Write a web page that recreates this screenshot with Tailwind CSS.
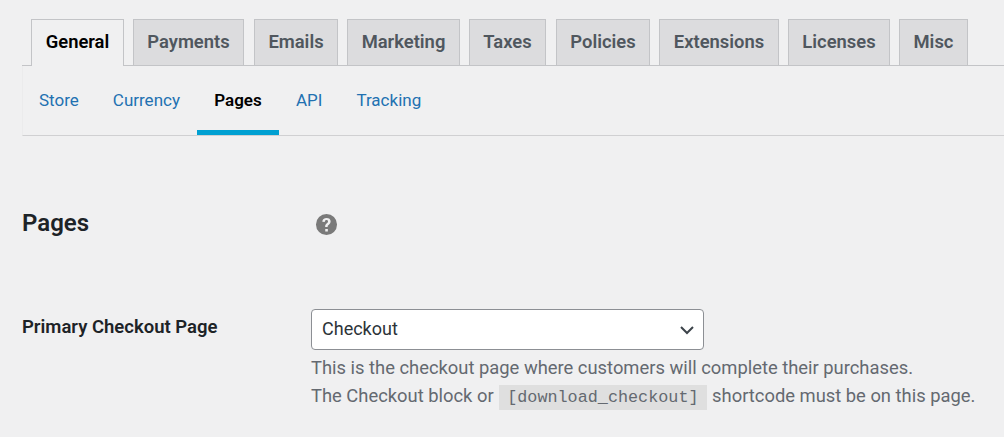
<!DOCTYPE html>
<html lang="en">
<head>
    <meta charset="UTF-8">
    <title>Settings - Pages</title>
    <script src="https://cdn.jsdelivr.net/npm/@tailwindcss/browser@4"></script>
</head>
<body class="bg-[#f0f0f1] w-[1004px] h-[437px] overflow-hidden font-['Roboto',sans-serif] text-[#1d2327] antialiased">

    <div class="pl-[22px] pt-[19px]">
        <!-- Main tabs -->
        <nav class="flex h-[47px] gap-[9px] pl-[9px] border-b border-[#c3c4c7] text-[18.4px] leading-[24px] font-semibold text-[#50575e]">
            <a class="h-[47px] w-[93px] pb-[2px] flex items-center justify-center border border-b-0 border-[#c3c4c7] bg-[#f0f0f1] text-black">General</a>
            <a class="h-[46px] w-[111px] pb-[2px] flex items-center justify-center border border-b-0 border-[#c3c4c7] bg-[#dcdcde]">Payments</a>
            <a class="ml-px h-[46px] w-[84px] pb-[2px] flex items-center justify-center border border-b-0 border-[#c3c4c7] bg-[#dcdcde]">Emails</a>
            <a class="h-[46px] w-[113px] pb-[2px] flex items-center justify-center border border-b-0 border-[#c3c4c7] bg-[#dcdcde]">Marketing</a>
            <a class="h-[46px] w-[77px] pb-[2px] flex items-center justify-center border border-b-0 border-[#c3c4c7] bg-[#dcdcde]">Taxes</a>
            <a class="ml-px h-[46px] w-[94px] pb-[2px] flex items-center justify-center border border-b-0 border-[#c3c4c7] bg-[#dcdcde]">Policies</a>
            <a class="h-[46px] w-[120px] pb-[2px] flex items-center justify-center border border-b-0 border-[#c3c4c7] bg-[#dcdcde]">Extensions</a>
            <a class="h-[46px] w-[102px] pb-[2px] flex items-center justify-center border border-b-0 border-[#c3c4c7] bg-[#dcdcde]">Licenses</a>
            <a class="h-[46px] w-[69px] pb-[2px] flex items-center justify-center border border-b-0 border-[#c3c4c7] bg-[#dcdcde]">Misc</a>
        </nav>

        <!-- Sub tabs -->
        <nav class="flex h-[70px] border-b border-l border-b-[#d0d0d2] border-l-[#ebebec] pl-[16px] text-[17px] text-[#2271b1]">
            <a class="pt-[22px]">Store</a>
            <a class="pt-[22px] ml-[34px]">Currency</a>
            <a class="w-[82px] ml-[17px] h-[69px] pt-[22px] text-center font-semibold text-black border-b-[5px] border-[#00a0d2]">Pages</a>
            <a class="pt-[22px] ml-[17px]">API</a>
            <a class="pt-[22px] ml-[34px]">Tracking</a>
        </nav>

        <!-- Section heading -->
        <div class="flex items-center h-[46px] mt-[65px]">
            <h2 class="w-[293px] pb-[2px] text-[24px] font-semibold">Pages</h2>
            <svg class="w-[23px] h-[23px] text-[#7a7a7a]" viewBox="0 0 24 24" fill="currentColor">
                <path fill-rule="evenodd" d="M12 1a11 11 0 1 1 0 22a11 11 0 0 1 0-22zM10.7 16.6v2.7h2.7v-2.7zM12.1 5.2c-2.6 0-4.3 1.4-4.5 3.8l2.6.3c.1-1.2.8-1.9 1.8-1.9c1 0 1.6.6 1.6 1.4c0 .7-.4 1.2-1.2 1.8c-1.3 1-1.8 1.8-1.8 3.3v.6h2.6v-.4c0-.8.3-1.2 1.2-1.9c1.2-.9 1.9-1.9 1.9-3.5c0-2.3-1.7-3.5-4.2-3.5z"/>
            </svg>
        </div>

        <!-- Primary checkout row -->
        <div class="flex mt-[62px]">
            <div class="w-[289px] pt-[6px] text-[18.5px] leading-[24px] font-semibold">Primary Checkout Page</div>
            <div>
                <div class="relative w-[393px] h-[41px] flex items-center pl-[10px] pb-[2px] bg-white border border-[#8c8f94] rounded-[4px] text-[18px] text-[#2c3338]">
                    Checkout
                    <svg class="absolute right-[8px] top-[12px] w-[16px] h-[16px]" viewBox="0 0 16 16" fill="none" stroke="#3c434a" stroke-width="2">
                        <path d="M2 5l6 6l6-6"/>
                    </svg>
                </div>
                <p class="mt-[4px] text-[18.36px] leading-[28px] text-[#646970] whitespace-nowrap">This is the checkout page where customers will complete their purchases.</p>
                <p class="text-[18.36px] leading-[28px] text-[#646970] whitespace-nowrap">The Checkout block or <code class="mx-[1px] px-[8px] py-[3px] bg-[#dfdfdf] font-['Liberation_Mono',monospace] text-[16.8px]">[download_checkout]</code> shortcode must be on this page.</p>
            </div>
        </div>
    </div>

</body>
</html>
